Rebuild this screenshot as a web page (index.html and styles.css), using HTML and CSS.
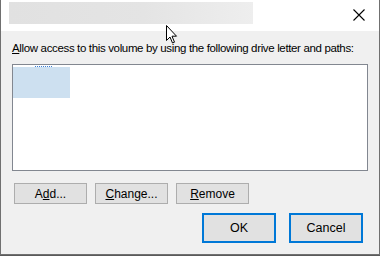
FILE: index.html
```html
<!DOCTYPE html>
<html lang="en">
<head>
  <meta charset="UTF-8" />
  <title>Change Drive Letter and Paths</title>
  <link rel="stylesheet" href="styles.css">
</head>
<body>
  <div class="dialog">
    <div class="titlebar">
      <div class="title-blur"></div>
      <span class="close">
        <svg width="12" height="12" viewBox="0 0 12 12"><path d="M0.5 0.5 L11.5 11.5 M11.5 0.5 L0.5 11.5" stroke="#000" stroke-width="1.1" fill="none"/></svg>
      </span>
    </div>
    <div class="content">
      <p class="label"><u>A</u>llow access to this volume by using the following drive letter and paths:</p>
      <div class="listbox">
        <div class="item"><span class="focus-dots"></span></div>
      </div>
      <div class="actions">
        <button class="btn">A<u>d</u>d...</button>
        <button class="btn"><u>C</u>hange...</button>
        <button class="btn"><u>R</u>emove</button>
      </div>
      <div class="footer">
        <button class="btn primary">OK</button>
        <button class="btn primary">Cancel</button>
      </div>
    </div>
    <svg class="cursor" width="14" height="20" viewBox="0 0 14 20"><path d="M0.5 0.5 L0.5 15.5 L4 12 L6.5 18 L8.5 17.2 L6 11.2 L10.5 11.2 Z" fill="#fff" stroke="#000" stroke-width="1"/></svg>
  </div>
</body>
</html>
```
FILE: styles.css
```css
body {
  margin: 0;
  background: #5a5a5a;
  font-family: "Liberation Sans", Arial, sans-serif;
  font-size: 12px;
  color: #000;
}
.dialog {
  position: relative;
  width: 378px;
  height: 254px;
  background: #f0f0f0;
  border: 1px solid #707070;
  border-top: none;
}
.titlebar {
  height: 31px;
  background: #fff;
  display: flex;
  align-items: center;
  justify-content: space-between;
  padding: 0 14px 0 8px;
}
.title-blur {
  width: 244px;
  height: 22px;
  margin-top: -5px;
  background: linear-gradient(90deg, #e1e1e1, #e4e4e4 55%, #eeeeee);
}
.close {
  display: flex;
  margin-top: -1px;
}
.content {
  padding: 10px 8px 0 11px;
}
.label {
  margin: 0 0 8px 0;
  line-height: 15px;
  font-size: 11.5px;
  white-space: nowrap;
  letter-spacing: -0.35px;
}
.listbox {
  height: 103px;
  margin-right: 3px;
  background: #fff;
  border: 1px solid #828790;
  padding: 2px 0 0 0;
}
.item {
  position: relative;
  width: 57px;
  height: 31px;
  background: #cde0f0;
}
.focus-dots {
  position: absolute;
  left: 22px;
  top: -1px;
  width: 17px;
  border-top: 1px dotted #3b7fd6;
}
.actions {
  display: flex;
  gap: 8px;
  margin: 12px 0 0 2px;
}
.btn {
  width: 73px;
  height: 21px;
  padding: 0;
  background: #e1e1e1;
  border: 1px solid #adadad;
  font-family: inherit;
  font-size: 12px;
  color: #000;
}
.footer {
  display: flex;
  justify-content: flex-end;
  gap: 13px;
  margin: 9px 8px 0 0;
}
.btn.primary {
  height: 30px;
  width: 74px;
  border: 2px solid #0078d7;
  font-size: 12.5px;
}
.cursor {
  position: absolute;
  left: 165px;
  top: 25px;
}
```
